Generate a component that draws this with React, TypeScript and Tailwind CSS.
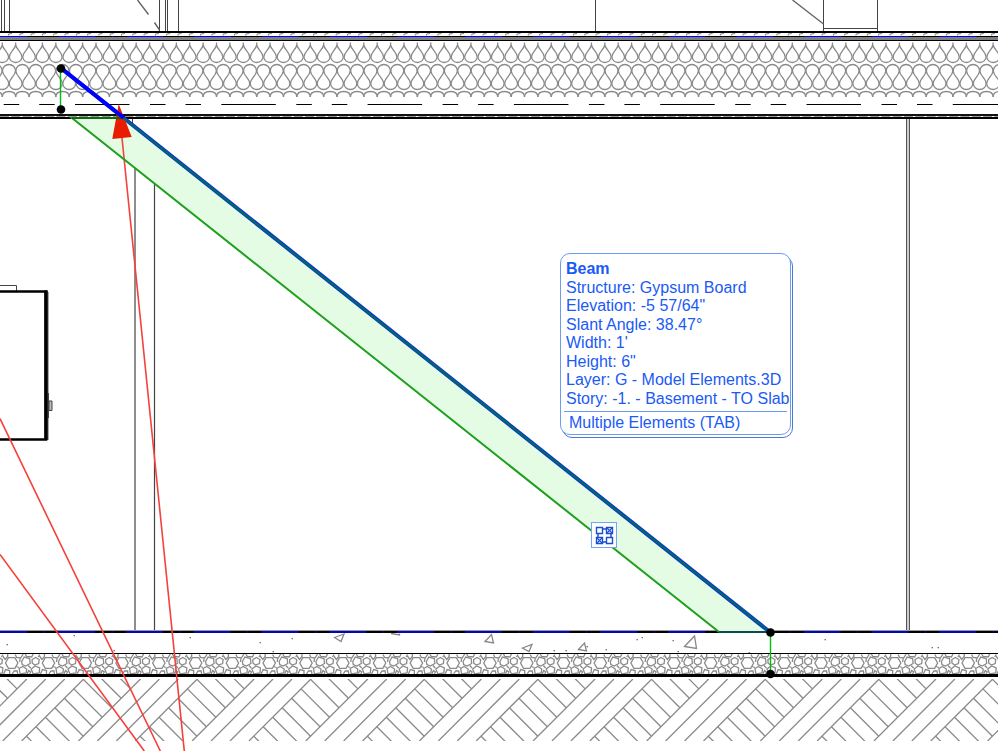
// ============================================
// SECTION VIEW - BEAM SELECTION
// Building section with hatches, beam and info tag
// ============================================
interface Point {
  x: number;
  y: number;
}

interface InfoRow {
  label: string;
  value: string;
}

// hatches are repeated up to this width, the window clips the rest
const DRAWING_WIDTH = 2000;

const INFO_ROWS: InfoRow[] = [
  { label: 'Structure', value: 'Gypsum Board' },
  { label: 'Elevation', value: '-5 57/64"' },
  { label: 'Slant Angle', value: '38.47°' },
  { label: 'Width', value: "1'" },
  { label: 'Height', value: '6"' },
  { label: 'Layer', value: 'G - Model Elements.3D' },
  { label: 'Story', value: '-1. - Basement - TO Slab' },
];

const NODES: Point[] = [
  { x: 61, y: 68.5 },
  { x: 61, y: 109.5 },
  { x: 770.5, y: 632.5 },
  { x: 770.5, y: 674 },
];

const AGGREGATE = [
  'M334.5 637.5L344 634L341 641.5Z',
  'M391 633.5L399.5 635L399.5 633.5',
  'M485 641.5L491.5 634.5L493.5 643Z',
  'M522.5 648L532 644.5L529 651.5Z',
  'M578.5 649.5L584.5 643L586.5 651Z',
  'M684.5 646.5L694.5 636L696.5 648.5Z',
];

const SPECKS: Point[] = [
  { x: 7, y: 644 }, { x: 74, y: 635 }, { x: 114, y: 650 }, { x: 190, y: 637 },
  { x: 260, y: 642 }, { x: 292, y: 638 }, { x: 273, y: 651 },
  { x: 554, y: 650 }, { x: 566, y: 650 }, { x: 606, y: 649 }, { x: 637, y: 639 },
  { x: 642, y: 637 }, { x: 587, y: 646 }, { x: 673, y: 640 }, { x: 678, y: 651 },
  { x: 749, y: 652 }, { x: 825, y: 639 }, { x: 932, y: 647 }, { x: 938, y: 647 },
];

const range = (count: number) => Array.from({ length: count }, (_, i) => i);

function InsulationHatch() {
  const step = 13.39;
  return (
    <g fill="none" stroke="#8a8a8a" strokeWidth={1.3}>
      {range(Math.ceil(DRAWING_WIDTH / step)).map((i) => (
        <g key={i} transform={`translate(${(15.67 + (i - 2) * step).toFixed(2)} 0)`}>
          <path d="M0 42.5V45C1 50 6.3 52 6.3 57C6.3 60 3.5 62.5 0 62.5S-6.3 60 -6.3 57C-6.3 52 -1 50 0 45" />
          <path d="M0.2 71C0.2 67 3.2 64.5 6.7 64.5S13.2 67 13.2 71" />
          <path d="M-0.2 71C-0.4 76 -6.4 78.5 -6.4 83.5C-6.4 87 -3.5 89.5 0 89.5S6.4 87 6.4 83.5C6.4 78.5 0.4 76 0.2 71" />
          <path d="M0 97C0 93.5 2.7 91.5 6.7 91.5S13.4 93.5 13.4 97" />
        </g>
      ))}
    </g>
  );
}

function GravelHatch() {
  const step = 36.79;
  return (
    <g fill="none" stroke="#8a8a8a" strokeWidth={1.3}>
      {range(Math.ceil(DRAWING_WIDTH / step)).map((i) => (
        <g key={i} transform={`translate(${(11.67 + (i - 1) * step).toFixed(2)} 663)`}>
          <path d="M-6.2 0L-3.2 -5.3H3.2L6.2 0L3.2 5.3H-3.2Z" />
          <path d="M10 -1.5L12.5 -6L18 -4.5L18.5 0.5L14 3L10.5 1.5Z" />
          <path d="M20.5 -3.5L24 -5.5L27.5 -3.5L27 0.5L23 2L20.5 0Z" />
          <path d="M7.5 5.5L11 3.5L15 6L14.5 10L8.5 11Z" />
          <path d="M19.5 6L23.5 3L28 5L27.5 10L21.5 11Z" />
          <path d="M-9 -7L-6.5 -3.5L-4 -6.5L-4 -9M3.5 -8.5L5 -5.5L9 -5L11.5 -9M8.5 -4.5L8 -1M13.5 -9L15 -6.5L20 -6L21.5 -9M28 -8.5L26.5 -6" />
          <path d="M-8 11L-6 6.5L-2 7.5L-2 11M0.5 11L2.5 8L5.5 8L6 11M15.5 11L17 7.5L19 9L18 11M4.5 3.5L7.5 4.5M16.5 2.5L19 5" />
        </g>
      ))}
    </g>
  );
}

function EarthHatch() {
  const step = 18.94;
  const top = 679;
  const bottom = 741;
  // strips run along x + y, the rungs inside each wide strip along x - y
  const period = step * 6;
  return (
    <g fill="none" stroke="#8a8a8a" strokeWidth={1.3} clipPath="url(#earth-clip)">
      <clipPath id="earth-clip">
        <rect x={0} y={top} width="100%" height={bottom - top} />
      </clipPath>
      {range(Math.ceil(DRAWING_WIDTH / period) + 2).map((n) => {
        const sum = 147.67 + period * (n - 2) + 615;
        const base = Math.round((sum - 615 - 240) / step);
        return (
          <g key={n}>
            {[0, 3, 4, 5].map((k) => {
              const s = sum + k * step;
              return <line key={k} x1={s - top} y1={top} x2={s - bottom} y2={bottom} />;
            })}
            {range(13).map((k) => {
              const d = (base + k) * step - 615;
              return (
                <line
                  key={`r${k}`}
                  x1={(sum + d) / 2}
                  y1={(sum - d) / 2}
                  x2={(sum + 3 * step + d) / 2}
                  y2={(sum + 3 * step - d) / 2}
                />
              );
            })}
          </g>
        );
      })}
    </g>
  );
}

function UpperSlab() {
  return (
    <g>
      <g stroke="#444" strokeWidth={1}>
        <path d="M1.5 0V31M4.5 0V31M9.5 0V31M159.5 0V31M165.5 0V31M167.5 0V31M178.5 0V31" />
        <path d="M595.5 0V31M823.5 0V31M877.5 0V31M824 28.5H877" />
        <path d="M137.5 0L148.5 14.5M154.5 22.5L159.5 30M792.5 0L823.5 24" stroke="#666" strokeWidth={1.4} fill="none" />
      </g>
      <rect x={0} y={31} width="100%" height={2} />
      {range(Math.ceil(DRAWING_WIDTH / 11.3)).map((i) => (
        <path key={i} d={`M${(8.5 + i * 11.3).toFixed(1)} 35.5V34L${(12 + i * 11.3).toFixed(1)} 33.5`} stroke="#8a8080" fill="none" />
      ))}
      <rect x={0} y={36} width="100%" height={1} />
      <line x1={-8.8} y1={36.5} x2={DRAWING_WIDTH} y2={36.5} stroke="#0000ff" strokeDasharray="36.5 16.5 1 13.77" />
      <rect x={0} y={37} width="100%" height={3} fill="#7d7d7d" />
      <rect x={0} y={40} width="100%" height={1} />
      <InsulationHatch />
      <line x1={-71.3} y1={104.5} x2={DRAWING_WIDTH} y2={104.5} stroke="#000" strokeWidth={1.2} strokeDasharray="54.5 20.5 15.5 20 15.5 20.3" />
      <rect x={0} y={114} width="100%" height={2} fill="#111" />
      <line x1={0} y1={116.5} x2={DRAWING_WIDTH} y2={116.5} stroke="#999" strokeDasharray="9 2.3" />
      <rect x={0} y={117} width="100%" height={2} />
    </g>
  );
}

function LowerSlab() {
  return (
    <g>
      <rect x={0} y={630} width="100%" height={1} fill="#999" />
      <rect x={0} y={631} width="100%" height={2} />
      <line x1={-9.6} y1={632} x2={DRAWING_WIDTH} y2={632} stroke="#0505b8" strokeWidth={2} strokeDasharray="37 16.5 1 13.27" />
      <g fill="none" stroke="#888" strokeWidth={1.3}>
        {AGGREGATE.map((d) => (
          <path key={d} d={d} />
        ))}
      </g>
      {SPECKS.map((p) => (
        <rect key={`${p.x}-${p.y}`} x={p.x - 0.5} y={p.y} width={1.5} height={1.3} fill="#777" />
      ))}
      <GravelHatch />
      <rect x={0} y={653} width="100%" height={1} />
      <rect x={0} y={674} width="100%" height={3} />
      <EarthHatch />
    </g>
  );
}

function Fixtures() {
  return (
    <g fill="none" stroke="#444">
      <path d="M135 168V631M154.5 184V631" strokeWidth={1.2} />
      <path d="M132.5 119V124" />
      <rect x={907} y={119} width={2} height={512} fill="#ccc" stroke="none" />
      <path d="M906.5 119V631M909.5 119V631" stroke="#555" />
      <path d="M0 285.5H16.5V291" />
      <path d="M0 291.5H46V439.5H0" stroke="#000" strokeWidth={2.6} />
      <path d="M46 290.5V440" stroke="#000" strokeWidth={3.6} />
      <path d="M48.5 292V440" stroke="#aaa" />
      <path d="M48.5 393V418" />
      <path d="M49 401H52V410.5H49Z" fill="#bbb" />
    </g>
  );
}

function Beam() {
  return (
    <g fill="none">
      <path d="M72 118H123.5L770 632H719Z" fill="#e3fce3" />
      <path d="M61.5 68.5L770.5 632.5" stroke="#0a32e0" strokeWidth={4} />
      <path d="M0 418.6L160.3 751M0 554.4L144.3 751M122 138L184.3 751" stroke="#f5413c" strokeWidth={1.6} />
      <path d="M118.7 104L131.7 137L112.3 139Z" fill="#e81c00" />
      <path d="M123.5 118H72L719 632" stroke="#1ea01e" strokeWidth={2} />
      <path d="M72 118H123" stroke="#0b6b0b" strokeWidth={2} />
      <path d="M719 632H770" stroke="#0a4a50" strokeWidth={2} />
      <path d="M61.5 68.5L124 118" stroke="#0000ff" strokeWidth={4} />
      <path d="M123.5 118L770.5 632.5" stroke="#046a5a" strokeWidth={2} />
      <path d="M60.5 68V109M770.5 632V674" stroke="#00bd10" strokeWidth={1.4} />
      {NODES.map((p) => (
        <circle key={`${p.x}-${p.y}`} cx={p.x} cy={p.y} r={4.3} fill="#000" />
      ))}
    </g>
  );
}

function InfoTag() {
  return (
    <div className="absolute left-[560px] top-[253px] text-[16px] leading-[18px] whitespace-nowrap text-[#1a5af5]">
      <div className="absolute inset-0 translate-x-[2px] translate-y-[3px] rounded-[10px] border border-[#4c78cf] bg-white" />
      <div className="relative w-[231px] rounded-[10px] border border-[#6b9cf5] bg-white px-[3px] pt-[6px] pb-[2px]">
        <ul className="flex h-[148px] flex-col justify-between pl-[2px]">
          <li className="font-bold">Beam</li>
          {INFO_ROWS.map((row) => (
            <li key={row.label}>
              {row.label}: {row.value}
            </li>
          ))}
        </ul>
        <p className="mt-[3px] border-t border-[#6b9cf5] pt-[2px] pl-[5px]">Multiple Elements (TAB)</p>
      </div>
    </div>
  );
}

function PetPaletteButton() {
  return (
    <button
      type="button"
      aria-label="Selection options"
      className="absolute left-[591px] top-[522px] size-[26px] border border-[#76a3f7] bg-white"
    >
      <svg className="size-[24px]" viewBox="0 0 24 24" fill="none" stroke="#1a4fd0" strokeWidth={1.4}>
        <path d="M4.5 4.5H10.5V10.5H4.5ZM14.5 4.5H20.5V10.5H14.5ZM4.5 14.5H10.5V20.5H4.5ZM14.5 14.5H20.5V20.5H14.5Z" />
        <path d="M10.5 6H14.5M10.5 19H14.5M6 10.5V14.5M19 10.5V14.5" />
        <path d="M14.5 4.5L20.5 10.5M20.5 4.5L14.5 10.5M4.5 14.5L10.5 20.5M10.5 14.5L4.5 20.5" strokeWidth={1.1} />
      </svg>
    </button>
  );
}

export default function App() {
  return (
    <main className="relative h-screen w-full overflow-hidden bg-white font-['Liberation_Sans',Arial,sans-serif]">
      <svg className="block h-full w-full" aria-hidden="true">
        <Fixtures />
        <UpperSlab />
        <LowerSlab />
        <Beam />
      </svg>
      <PetPaletteButton />
      <InfoTag />
    </main>
  );
}
